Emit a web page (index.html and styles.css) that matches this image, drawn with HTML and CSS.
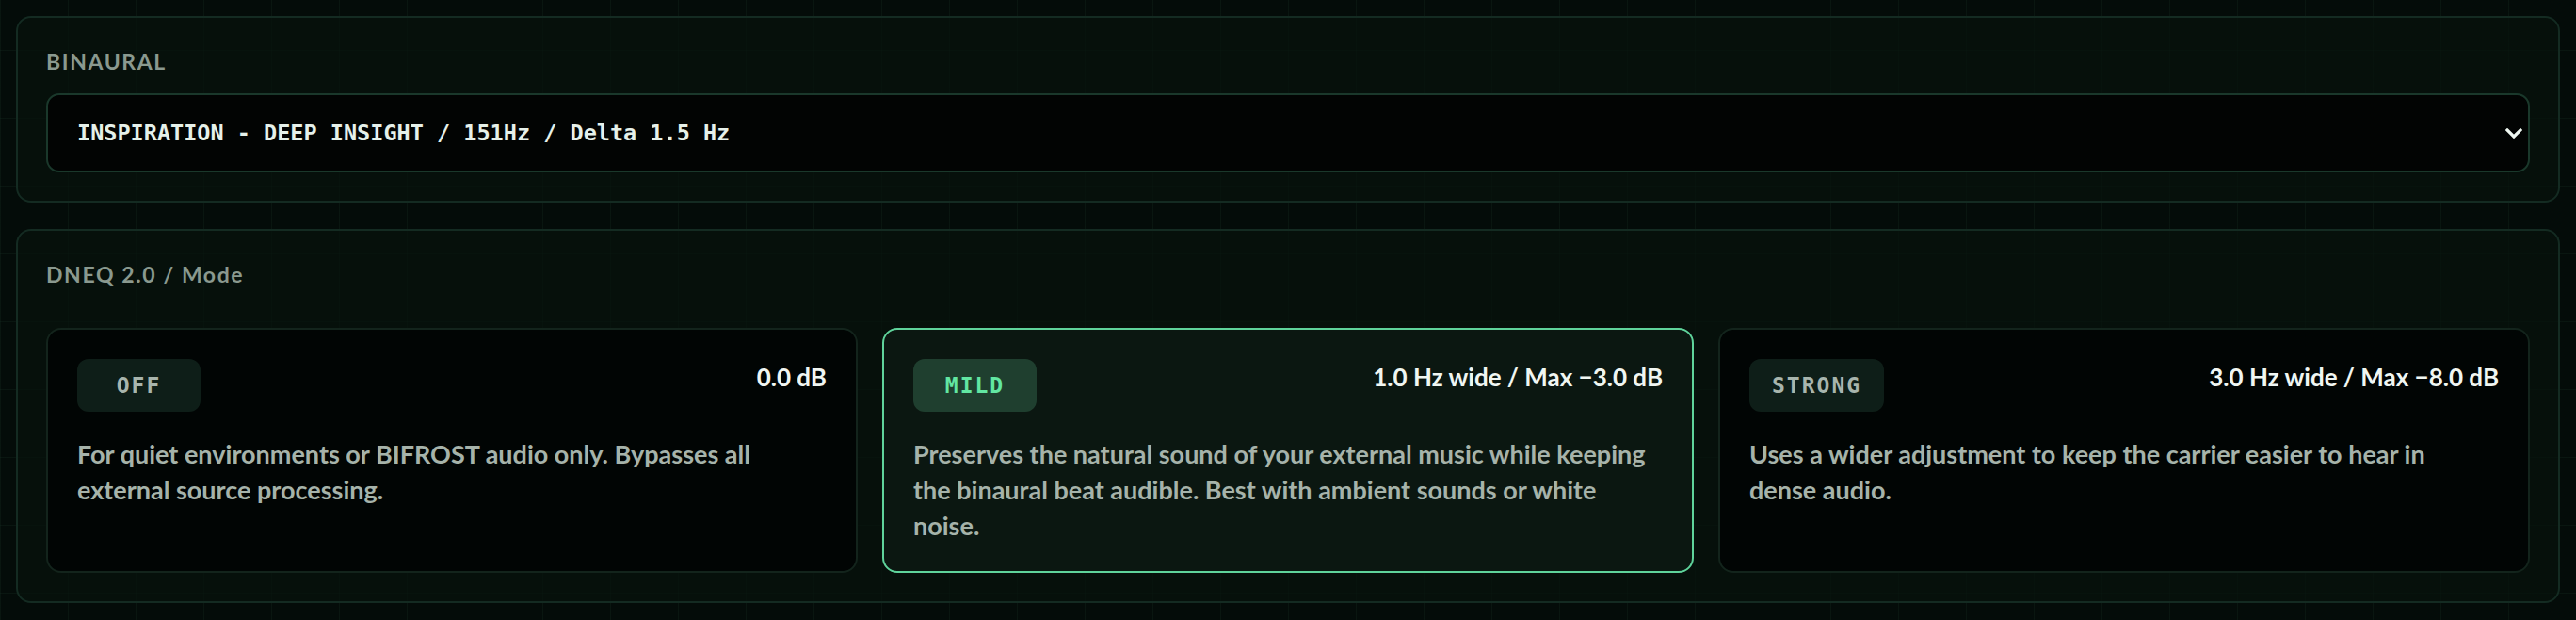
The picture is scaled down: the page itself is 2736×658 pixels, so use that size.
FILE: index.html
```html
<!DOCTYPE html>
<html lang="en">
<head>
<meta charset="utf-8">
<title>Binaural / DNEQ</title>
<link rel="stylesheet" href="styles.css">
</head>
<body>
<main class="page">
  <section class="panel">
    <label class="panel-label upper" for="binaural">Binaural</label>
    <div class="select-wrap">
      <select id="binaural" class="select">
        <option>INSPIRATION - DEEP INSIGHT / 151Hz / Delta 1.5 Hz</option>
      </select>
      <svg class="chevron" viewBox="0 0 18 11" aria-hidden="true">
        <path d="M2 2 L9 9 L16 2" fill="none" stroke="currentColor" stroke-width="3.2" stroke-linecap="square" stroke-linejoin="miter"/>
      </svg>
    </div>
  </section>

  <section class="panel">
    <h2 class="panel-label mode-label">DNEQ 2.0 / Mode</h2>
    <div class="modes">
      <article class="mode">
        <div class="mode-head">
          <span class="badge">OFF</span>
          <span class="mode-value">0.0 dB</span>
        </div>
        <p class="mode-desc">For quiet environments or BIFROST audio only. Bypasses all<br>external source processing.</p>
      </article>
      <article class="mode is-active">
        <div class="mode-head">
          <span class="badge">MILD</span>
          <span class="mode-value">1.0 Hz wide / Max −3.0 dB</span>
        </div>
        <p class="mode-desc">Preserves the natural sound of your external music while keeping<br>the binaural beat audible. Best with ambient sounds or white<br>noise.</p>
      </article>
      <article class="mode">
        <div class="mode-head">
          <span class="badge">STRONG</span>
          <span class="mode-value">3.0 Hz wide / Max −8.0 dB</span>
        </div>
        <p class="mode-desc">Uses a wider adjustment to keep the carrier easier to hear in<br>dense audio.</p>
      </article>
    </div>
  </section>
</main>
</body>
</html>
```

FILE: styles.css
```css
html, body {
  height: 100%;
}

body {
  margin: 0;
  background-color: #040c09;
  background-image:
    linear-gradient(to right, rgba(70, 140, 105, 0.08) 1px, transparent 1px),
    linear-gradient(to bottom, rgba(70, 140, 105, 0.08) 1px, transparent 1px);
  background-size: 72px 72px;
  background-position: 0 53px;
  font-family: "Lato", "Liberation Sans", sans-serif;
  color: #e9f2ec;
}

.page {
  padding: 17px;
  display: flex;
  flex-direction: column;
  gap: 28px;
}

/* section panels */
.panel {
  border: 2px solid #142b22;
  border-radius: 16px;
  background: rgba(7, 18, 13, 0.72);
  padding: 30px;
  display: flex;
  flex-direction: column;
}

.panel-label {
  display: block;
  margin: 0;
  font-size: 23px;
  line-height: 32px;
  font-weight: 700;
  letter-spacing: 1.6px;
  color: #8a998f;
}

.upper {
  text-transform: uppercase;
}

/* preset select */
.select-wrap {
  position: relative;
  margin-top: 18px;
}

.select {
  appearance: none;
  -webkit-appearance: none;
  display: block;
  width: 100%;
  height: 84px;
  margin: 0;
  border: 2px solid #1a382b;
  border-radius: 14px;
  background: #020403;
  padding: 0 60px 0 31px;
  font-family: "DejaVu Sans Mono", "Liberation Mono", monospace;
  font-weight: 700;
  font-size: 23.5px;
  color: #e6f1ea;
  outline: none;
}

.chevron {
  position: absolute;
  right: 8px;
  top: 37px;
  width: 18px;
  height: 11px;
  color: #eef7f1;
  pointer-events: none;
}

/* mode cards */
.mode-label {
  margin-bottom: 41px;
}

.modes {
  display: grid;
  grid-template-columns: repeat(3, 1fr);
  gap: 26px;
}

.mode {
  border: 2px solid #13241c;
  border-radius: 16px;
  background: rgba(1, 4, 3, 0.9);
  padding: 31px 31px 29px;
  display: flex;
  flex-direction: column;
}

.mode.is-active {
  border-color: #5fd39b;
  background: rgba(11, 24, 18, 0.96);
}

.mode-head {
  display: flex;
  justify-content: space-between;
  align-items: flex-start;
  gap: 20px;
}

.badge {
  box-sizing: border-box;
  height: 56px;
  min-width: 131px;
  padding: 0 24px;
  border-radius: 12px;
  background: rgba(32, 62, 48, 0.45);
  display: inline-flex;
  align-items: center;
  justify-content: center;
  font-family: "DejaVu Sans Mono", "Liberation Mono", monospace;
  font-weight: 700;
  font-size: 23px;
  letter-spacing: 2px;
  color: #a8b5ad;
}

.is-active .badge {
  background: rgba(52, 104, 78, 0.5);
  color: #62e6a2;
}

.mode-value {
  font-size: 26px;
  line-height: 38px;
  font-weight: 700;
  color: #f0f6f2;
  white-space: nowrap;
}

.mode-desc {
  margin: 26px 0 0;
  font-size: 27px;
  line-height: 38px;
  font-weight: 700;
  color: #a6b3aa;
}
```
